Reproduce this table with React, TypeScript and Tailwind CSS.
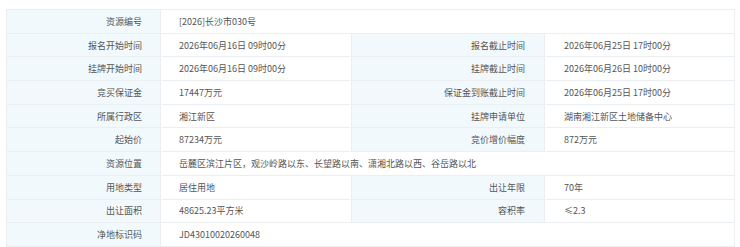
const rows: any[] = [
  ["资源编号", "[2026]长沙市030号"],
  ["报名开始时间", "2026年06月16日 09时00分", "报名截止时间", "2026年06月25日 17时00分"],
  ["挂牌开始时间", "2026年06月16日 09时00分", "挂牌截止时间", "2026年06月26日 10时00分"],
  ["竞买保证金", "17447万元", "保证金到账截止时间", "2026年06月25日 17时00分"],
  ["所属行政区", "湘江新区", "挂牌申请单位", "湖南湘江新区土地储备中心"],
  ["起始价", "87234万元", "竞价增价幅度", "872万元"],
  ["资源位置", "岳麓区滨江片区，观沙岭路以东、长望路以南、潇湘北路以西、谷岳路以北"],
  ["用地类型", "居住用地", "出让年限", "70年"],
  ["出让面积", "48625.23平方米", "容积率", "≤2.3"],
  ["净地标识码", "JD43010020260048"],
];

const App = () => {
  return (
    <div
      className="w-[740px] h-[247px] bg-white pt-[9px] pl-[6px]"
      style={{ fontFamily: '"Microsoft YaHei", "Noto Sans CJK SC", sans-serif' }}
    >
      <table className="w-[728px] border-collapse table-fixed text-[9px] text-[#555]">
        <colgroup>
          <col className="w-[154px]" />
          <col className="w-[191px]" />
          <col className="w-[193px]" />
          <col className="w-[190px]" />
        </colgroup>
        <tbody>
          {rows.map((r, i) => (
            <tr key={i} className="h-[23.7px]">
              <td className="border border-[#eceff1] bg-[#f2f9fd] text-right pr-[18px] leading-none">
                {r[0]}
              </td>
              {r.length === 2 ? (
                <td colSpan={3} className="border border-[#eceff1] pl-[18px] leading-none">
                  {r[1]}
                </td>
              ) : (
                <>
                  <td className="border border-[#eceff1] pl-[18px] leading-none">{r[1]}</td>
                  <td className="border border-[#eceff1] bg-[#f2f9fd] text-right pr-[19px] leading-none">
                    {r[2]}
                  </td>
                  <td className="border border-[#eceff1] pl-[19px] leading-none">{r[3]}</td>
                </>
              )}
            </tr>
          ))}
        </tbody>
      </table>
    </div>
  );
};

export default App;
